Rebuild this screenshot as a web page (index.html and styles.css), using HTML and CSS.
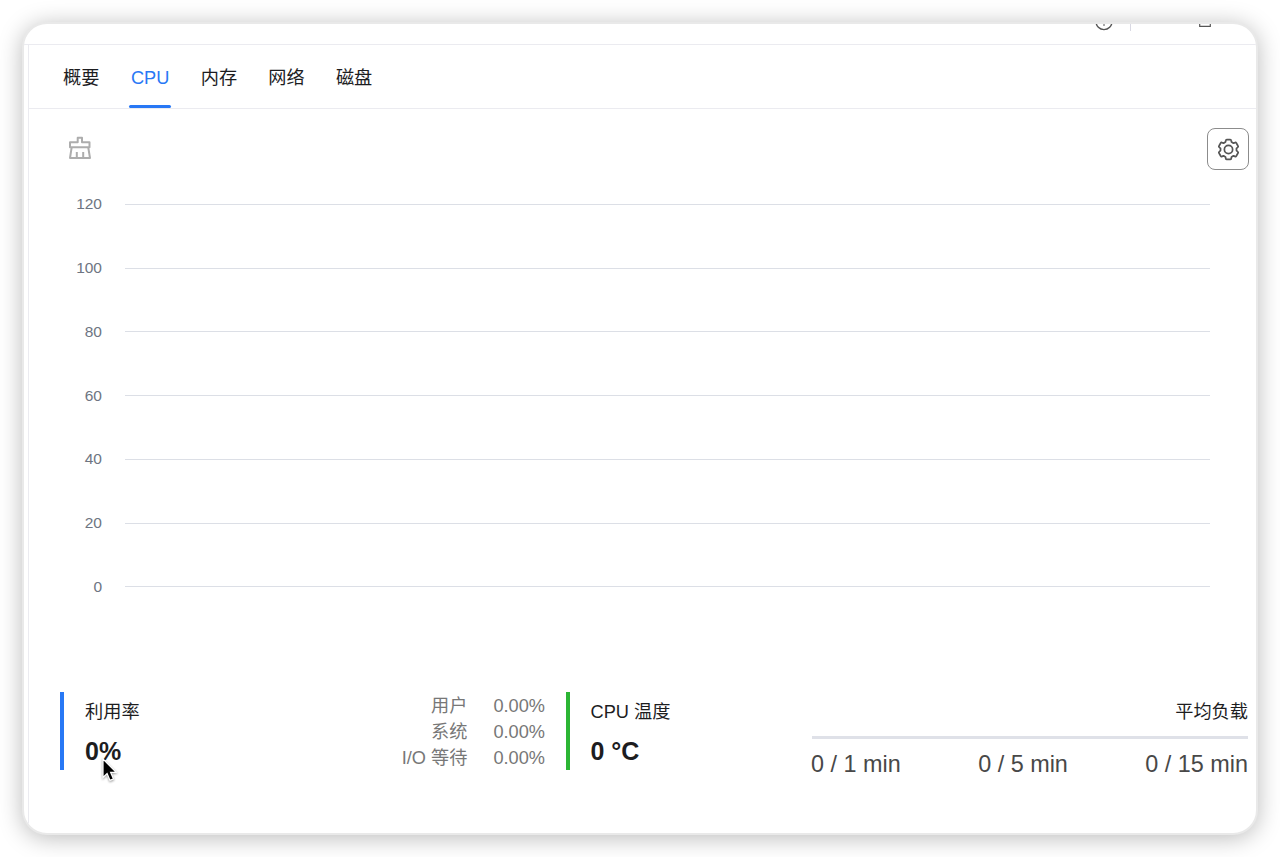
FILE: index.html
```html
<!DOCTYPE html>
<html lang="zh-CN">
<head>
    <meta charset="UTF-8">
    <title>CPU</title>
    <link rel="stylesheet" href="styles.css">
</head>
<body>
<div class="window">
    <!--顶部工具栏-->
    <div class="topbar">
        <svg class="info" width="18" height="8" viewBox="0 0 18 8" fill="none" stroke="#555">
            <path d="M1 -2.400a8 8 0 0 0 16 0" stroke-width="1.400"/>
            <path d="M9 0v2" stroke-width="1"/>
        </svg>
        <span class="divider"></span>
        <svg class="box" width="12" height="5" viewBox="0 0 12 5" fill="none" stroke="#555" stroke-width="1.200">
            <path d="M.7 0v2.300h10.600V0"/>
        </svg>
    </div>
    <div class="page">
        <!--标签页-->
        <ul class="tabs">
            <li>概要</li>
            <li class="active">CPU</li>
            <li>内存</li>
            <li>网络</li>
            <li>磁盘</li>
        </ul>
        <div class="tools">
            <svg class="clear" width="24" height="24" viewBox="0 0 24 24" fill="none" stroke="#adadad" stroke-width="2" stroke-linejoin="round">
                <path d="M9.700 6.200V1.800h4.300v4.400h7.500v5H2v-5z"/>
                <path d="M3.700 11.200L2 22h20l-1.800-10.800M8.800 22v-6M15.200 22v-6"/>
            </svg>
            <button class="setting">
                <svg width="23" height="23" viewBox="0 0 24 24" fill="none" stroke="#555" stroke-width="1.8" stroke-linejoin="round">
                    <path d="M10.200 1.600h3.600q.9 0 1 .9l.35 1.700 2.020 1.180 1.570-.6q.9-.4 1.400.4l1.800 3.120q.5.8-.3 1.400l-1.320 1.130v2.340l1.320 1.130q.8.6.3 1.400l-1.800 3.120q-.5.8-1.400.4l-1.570-.6-2.020 1.180-.35 1.700q-.1.9-1 .9h-3.600q-.9 0-1-.9l-.35-1.700-2.020-1.180-1.570.6q-.9.4-1.400-.4l-1.800-3.120q-.5-.8.3-1.400l1.320-1.130v-2.340L2.360 9.700q-.8-.6-.3-1.400l1.800-3.120q.5-.8 1.400-.4l1.570.6 2.020-1.180.35-1.700q.1-.9 1-.9z"/>
                    <circle cx="12" cy="12" r="4.300"/>
                </svg>
            </button>
        </div>
        <!--图表-->
        <div class="chart">
            <div class="row"><span>120</span><i></i></div>
            <div class="row"><span>100</span><i></i></div>
            <div class="row"><span>80</span><i></i></div>
            <div class="row"><span>60</span><i></i></div>
            <div class="row"><span>40</span><i></i></div>
            <div class="row"><span>20</span><i></i></div>
            <div class="row"><span>0</span><i></i></div>
        </div>
        <!--底部数据-->
        <div class="stats">
            <div class="card usage">
                <div>
                    <div class="title">利用率</div>
                    <div class="value">0%</div>
                </div>
                <div class="detail">
                    <span>用户</span><span>0.00%</span>
                    <span>系统</span><span>0.00%</span>
                    <span>I/O 等待</span><span>0.00%</span>
                </div>
            </div>
            <div class="card temp">
                <div>
                    <div class="title">CPU 温度</div>
                    <div class="value">0 °C</div>
                </div>
            </div>
            <div class="load">
                <div class="title">平均负载</div>
                <div class="loads">
                    <span>0 / 1 min</span>
                    <span>0 / 5 min</span>
                    <span>0 / 15 min</span>
                </div>
            </div>
        </div>
    </div>
</div>
<!--鼠标指针-->
<svg class="cursor" width="20" height="28" viewBox="0 0 20 28">
    <path d="M3 2v18.500l4.100-3.900 2.900 6.800 3.500-1.500-2.900-6.600h5.600z" fill="#000" stroke="#fff" stroke-width="1.200"/>
</svg>
</body>
</html>
```
FILE: styles.css
```css
* {
    margin: 0;
    padding: 0;
    box-sizing: border-box;
}
body{
    height: 857px;
    padding: 22px;
    overflow: hidden;
    background-color: #fff;
    font-family: "Liberation Sans", "Noto Sans CJK SC", sans-serif;
    font-size: 18.200px;
    color: #1d1d1f;
}
ul{
    list-style: none;
}
svg{
    display: block;
}
.window{
    width: 1236px;
    height: 813px;
    border: 2px solid #e9e9e9;
    border-radius: 25px;
    overflow: hidden;
    background-color: #fff;
    box-shadow: 0 3px 23px rgba(0, 0, 0, 0.27);
}
.topbar{
    height: 21px;
    border-bottom: 1px solid #ebebf0;
    display: flex;
    align-items: flex-start;
    justify-content: flex-end;
    padding-right: 45px;
}
.divider{
    width: 1px;
    height: 7px;
    margin: 0 68px 0 17px;
    background-color: #d9d9e3;
}
.page{
    height: 788px;
    margin-left: 4px;
    border-left: 1px solid #ebebf0;
}
.tabs{
    height: 64px;
    padding-left: 34px;
    display: flex;
    gap: 31.200px;
    border-bottom: 1px solid #ebebf0;
}
.tabs li{
    line-height: 67px;
    height: 63px;
}
.tabs .active{
    width: 42px;
    margin: 0 -1.500px;
    text-align: center;
    color: #2878f5;
}
.tabs .active:after{
    content: "";
    display: block;
    height: 3px;
    margin-top: -7px;
    border-radius: 2px;
    background-color: #2878f5;
}
.tools{
    height: 63px;
    padding: 20px 7px 0 39px;
    display: flex;
    justify-content: space-between;
}
.clear{
    margin-top: 7px;
}
.setting{
    width: 42px;
    height: 42px;
    margin-top: -1px;
    border: 1px solid #8c8c8c;
    border-radius: 8px;
    background-color: #fff;
    display: flex;
    align-items: center;
    justify-content: center;
}
.chart{
    height: 520px;
    padding: 0.600px 46px 0 0;
}
.row{
    height: 63.750px;
    display: flex;
    align-items: center;
}
.row span{
    width: 73px;
    margin-right: 23px;
    font-size: 15.500px;
    text-align: right;
    color: #6e7582;
}
.row i{
    flex: 1;
    height: 1px;
    background-color: #dcdfe6;
}
.stats{
    display: flex;
    padding: 0 8px 0 31px;
}
.card{
    height: 78px;
    border-left: 4px solid #2878f5;
    padding: 0 21px;
    display: flex;
    justify-content: space-between;
}
.usage{
    width: 506px;
}
.temp{
    width: 246px;
    padding-left: 20.500px;
    border-color: #2bb534;
}
.title{
    height: 38px;
    line-height: 40px;
    white-space: nowrap;
}
.value{
    line-height: 42px;
    font-size: 25px;
    font-weight: bold;
}
.detail{
    display: grid;
    grid-template-columns: auto auto;
    grid-auto-rows: 26px;
    column-gap: 26px;
    line-height: 28px;
    text-align: right;
    color: #777;
}
.load{
    flex: 1;
}
.load .title{
    height: 44px;
    text-align: right;
}
.loads{
    display: flex;
    justify-content: space-between;
    border-top: 3px solid #dfe1e8;
    line-height: 50px;
    font-size: 23.400px;
    color: #484848;
}
.loads span{
    margin-left: -1px;
}
.cursor{
    position: absolute;
    left: 100px;
    top: 757px;
    filter: drop-shadow(0 1px 1px rgba(0, 0, 0, 0.4));
}
```
